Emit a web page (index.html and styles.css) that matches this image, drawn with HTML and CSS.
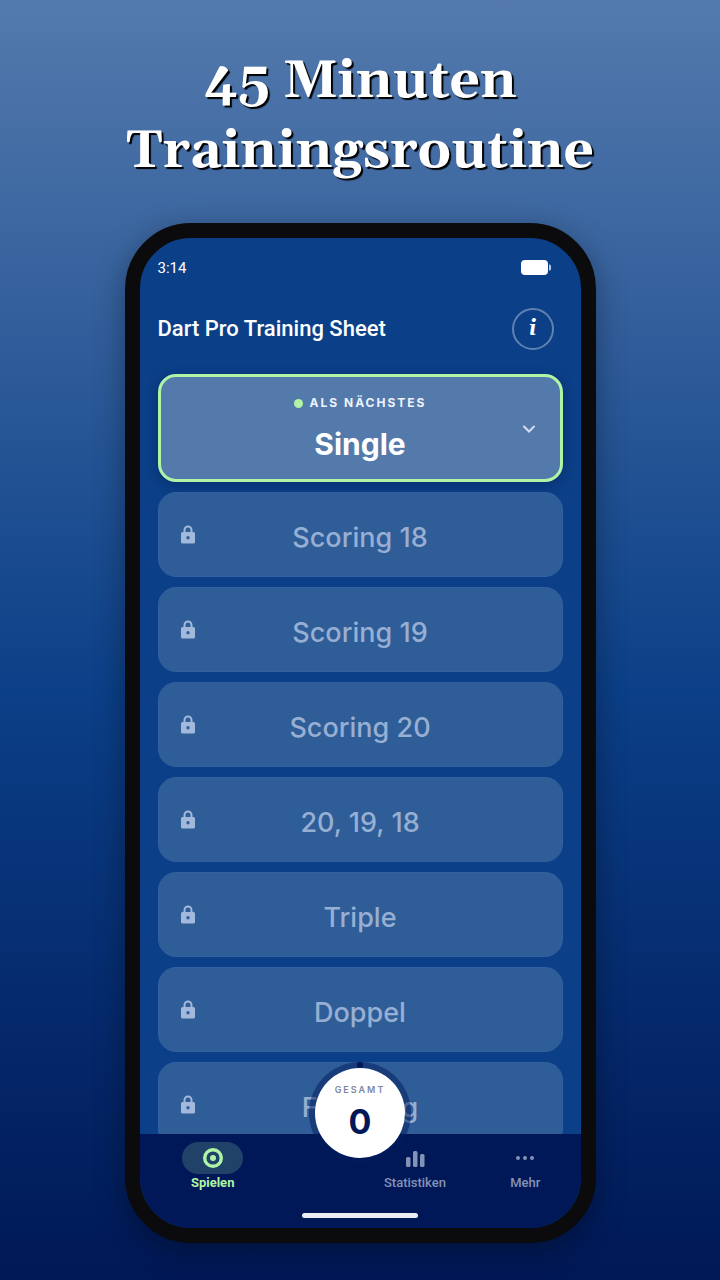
FILE: index.html
```html
<!DOCTYPE html>
<html lang="de">

<head>
    <meta charset="UTF-8">
    <meta name="viewport" content="width=device-width, initial-scale=1.0">
    <title>Dart Pro Training Sheet</title>
    <link rel="stylesheet" href="styles.css">
</head>

<body>
    <svg class="sprite" aria-hidden="true">
        <symbol id="lock" viewBox="0 0 16 20">
            <path d="M4.500 8.500V5a3.500 3.500 0 0 1 7 0v3.500" fill="none" stroke="currentColor" stroke-width="2"/>
            <path fill="currentColor" fill-rule="evenodd" d="M2.500 7h11a1.500 1.500 0 0 1 1.500 1.500v8.500a1.500 1.500 0 0 1-1.500 1.500h-11A1.500 1.500 0 0 1 1 17V8.500A1.500 1.500 0 0 1 2.500 7zM8 11a1.700 1.700 0 1 0 0 3.400A1.700 1.700 0 0 0 8 11z"/>
        </symbol>
    </svg>

    <h1 class="headline">45 Minuten<br>Trainingsroutine</h1>

    <div class="phone">
        <div class="status">
            <span>3:14</span>
            <svg class="battery" viewBox="0 0 30 15" aria-hidden="true">
                <rect width="27" height="15" rx="4" fill="#fff"/>
                <path d="M28 4.500c1.300 0 2 .6 2 1.600v2.800c0 1-.7 1.600-2 1.600z" fill="#b9c8e0"/>
            </svg>
        </div>

        <header class="header">
            <h2>Dart Pro Training Sheet</h2>
            <button class="info" type="button" aria-label="Info">i</button>
        </header>

        <main class="list">
            <button class="card next" type="button">
                <span class="tag"><span class="dot"></span>ALS NÄCHSTES</span>
                <span class="name">Single</span>
                <svg class="chevron" viewBox="0 0 14 9" aria-hidden="true">
                    <path d="M2 1.500l5 5 5-5" fill="none" stroke="currentColor" stroke-width="2" stroke-linecap="round"/>
                </svg>
            </button>
            <button class="card" type="button" disabled><svg class="lock"><use href="#lock"/></svg>Scoring 18</button>
            <button class="card" type="button" disabled><svg class="lock"><use href="#lock"/></svg>Scoring 19</button>
            <button class="card" type="button" disabled><svg class="lock"><use href="#lock"/></svg>Scoring 20</button>
            <button class="card" type="button" disabled><svg class="lock"><use href="#lock"/></svg>20, 19, 18</button>
            <button class="card" type="button" disabled><svg class="lock"><use href="#lock"/></svg>Triple</button>
            <button class="card" type="button" disabled><svg class="lock"><use href="#lock"/></svg>Doppel</button>
            <button class="card" type="button" disabled><svg class="lock"><use href="#lock"/></svg>Finishing</button>
        </main>

        <nav class="nav">
            <div class="tabs">
                <a class="tab active" href="#spielen">
                    <span class="pill">
                        <svg width="20" height="20" viewBox="0 0 20 20" aria-hidden="true">
                            <circle cx="10" cy="10" r="8.300" fill="none" stroke="currentColor" stroke-width="3.400"/>
                            <circle cx="10" cy="10" r="3" fill="currentColor"/>
                        </svg>
                    </span>
                    Spielen
                </a>
                <a class="tab stats" href="#statistiken">
                    <span class="pill">
                        <svg width="20" height="20" viewBox="0 0 20 20" aria-hidden="true">
                            <g fill="currentColor">
                                <rect x="1" y="9" width="4.500" height="10" rx="1.500"/>
                                <rect x="8" y="3" width="4.500" height="16" rx="1.500"/>
                                <rect x="15" y="6" width="4.500" height="13" rx="1.500"/>
                            </g>
                        </svg>
                    </span>
                    Statistiken
                </a>
                <a class="tab" href="#mehr">
                    <span class="pill">
                        <svg width="20" height="20" viewBox="0 0 20 20" aria-hidden="true">
                            <g fill="currentColor">
                                <circle cx="3" cy="10" r="2"/>
                                <circle cx="10" cy="10" r="2"/>
                                <circle cx="17" cy="10" r="2"/>
                            </g>
                        </svg>
                    </span>
                    Mehr
                </a>
            </div>
            <div class="home"></div>
            <div class="ring">
                <div class="total">
                    <span class="total-label">GESAMT</span>
                    <span class="total-value">0</span>
                </div>
            </div>
        </nav>
    </div>
</body>

</html>
```
FILE: styles.css
```css
* {
    box-sizing: border-box;
}

body {
    margin: 0;
    height: 100vh;
    padding: 47px 20px 37px;
    display: flex;
    flex-direction: column;
    align-items: center;
    background: linear-gradient(#547aad 0%, #0b3f87 54%, #001856 100%);
    color: white;
    font-family: Roboto, sans-serif;
}

.sprite {
    display: none;
}

.headline {
    margin: 0 0 36px;
    font-family: Gelasio, Georgia, "DejaVu Serif", serif;
    font-size: 53px;
    line-height: 70px;
    text-align: center;
    text-shadow: 2px 2px 1px black;
}

/* Phone frame */
.phone {
    flex: 1;
    min-height: 0;
    width: 100%;
    max-width: 471px;
    display: flex;
    flex-direction: column;
    overflow: hidden;
    border: 15px solid #0b0b0d;
    border-radius: 66px;
    background-color: #0b3f87;
    box-shadow: 0 8px 30px rgba(0, 0, 0, 0.35);
}

.status {
    flex: none;
    height: 59px;
    padding: 0 30px 0 18px;
    display: flex;
    align-items: center;
    justify-content: space-between;
    font-size: 15px;
}

.battery {
    width: 30px;
    height: 15px;
}

.header {
    flex: none;
    height: 63px;
    padding: 0 27px 0 18px;
    display: flex;
    align-items: center;
    justify-content: space-between;
}

.header h2 {
    margin: 0;
    font-size: 22px;
    font-weight: 500;
}

.info {
    width: 42px;
    height: 42px;
    padding: 0;
    border: 2px solid rgba(255, 255, 255, 0.35);
    border-radius: 50%;
    background: none;
    color: white;
    font: italic bold 22px Gelasio, "DejaVu Serif", serif;
}

/* Training list */
.list {
    flex: 1;
    min-height: 0;
    padding: 14px 18px 0;
    display: flex;
    flex-direction: column;
    gap: 10px;
    overflow: hidden;
}

.card {
    position: relative;
    flex: none;
    height: 85px;
    padding: 6px 0 0;
    border: 1px solid #3260a0;
    border-radius: 18px;
    background-color: #2f5d98;
    color: #97afd2;
    font-family: Inter, sans-serif;
    font-size: 27px;
    font-weight: 500;
    text-align: center;
}

.lock {
    position: absolute;
    left: 21px;
    top: 32px;
    width: 16px;
    height: 20px;
    color: #a3b9dc;
}

.next {
    height: 108px;
    padding: 2px 0 0;
    display: flex;
    flex-direction: column;
    align-items: center;
    justify-content: center;
    border: 3px solid #b0f5a5;
    background-color: #547aab;
    color: white;
    box-shadow: 0 3px 12px rgba(0, 20, 70, 0.35);
}

.tag {
    display: flex;
    align-items: center;
    gap: 7px;
    color: #eef2fc;
    font-size: 12px;
    font-weight: 700;
    line-height: 18px;
    letter-spacing: 2px;
}

.dot {
    width: 9px;
    height: 9px;
    border-radius: 50%;
    background-color: #b0f5a5;
}

.name {
    margin-top: 12px;
    font-size: 30px;
    font-weight: 700;
    line-height: 40px;
}

.chevron {
    position: absolute;
    right: 24px;
    top: 48px;
    width: 14px;
    height: 9px;
    color: #d5def0;
}

/* Bottom bar */
.nav {
    position: relative;
    flex: none;
    height: 94px;
    padding: 8px 0 10px;
    display: flex;
    flex-direction: column;
    align-items: center;
    justify-content: space-between;
    background-color: #001858;
}

.tabs {
    width: 100%;
    padding-left: 18px;
    display: grid;
    grid-template-columns: 6fr 5fr 6fr 6fr;
}

.tab {
    display: flex;
    flex-direction: column;
    align-items: center;
    color: #8492b5;
    font-size: 13px;
    font-weight: 500;
    line-height: 18px;
    text-decoration: none;
}

.stats {
    grid-column: 3;
}

.pill {
    width: 61px;
    height: 32px;
    display: flex;
    align-items: center;
    justify-content: center;
    border-radius: 16px;
}

.active {
    color: #b0f5a5;
    font-weight: 700;
}

.active .pill {
    background-color: #204268;
}

.home {
    width: 116px;
    height: 5px;
    border-radius: 3px;
    background-color: #eceef6;
}

/* Total score, sits over the list and the bar */
.ring {
    position: absolute;
    left: 50%;
    top: -72px;
    width: 102px;
    height: 102px;
    padding: 6px;
    border-radius: 50%;
    background-color: rgba(0, 28, 90, 0.5);
    transform: translateX(-50%);
}

.ring::before {
    content: "";
    position: absolute;
    left: 48px;
    top: 0;
    width: 6px;
    height: 6px;
    border-radius: 50%;
    background-color: #001858;
}

.total {
    height: 90px;
    padding-top: 14px;
    display: flex;
    flex-direction: column;
    align-items: center;
    border-radius: 50%;
    background-color: white;
    color: #001858;
    font-family: Inter, sans-serif;
}

.total-label {
    color: #7c86a3;
    font-size: 9px;
    font-weight: 600;
    line-height: 16px;
    letter-spacing: 2px;
}

.total-value {
    font-size: 34px;
    font-weight: 700;
    line-height: 48px;
}
```
